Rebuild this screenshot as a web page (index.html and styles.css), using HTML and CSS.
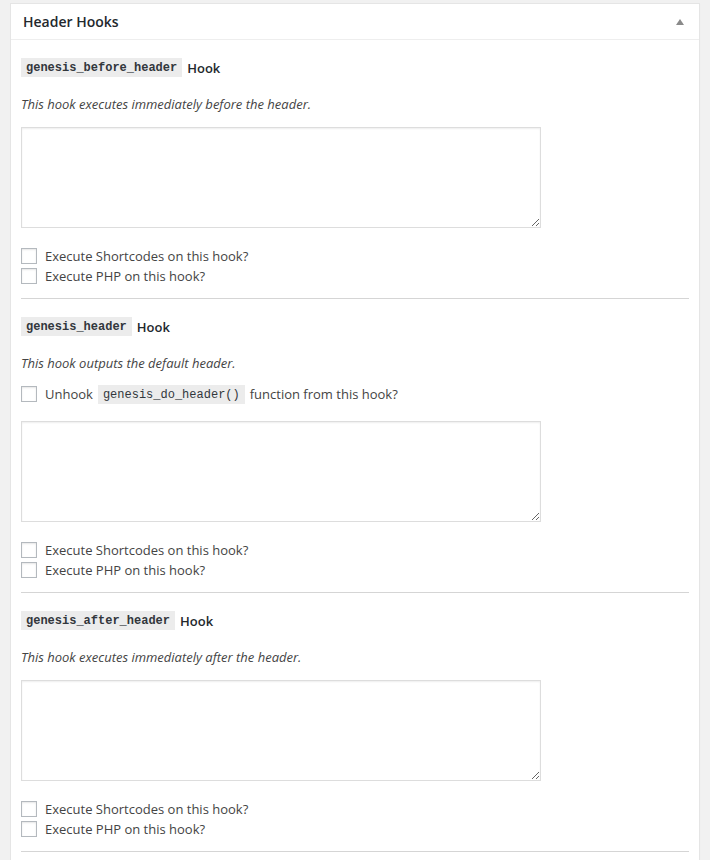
FILE: index.html
```
<!DOCTYPE html>
<html lang="en">
<head>
    <meta charset="UTF-8">
    <meta name="viewport" content="width=device-width, initial-scale=1.0">
    <title>Header Hooks</title>
    <link rel="stylesheet" href="styles.css">
</head>
<body>
    <div class="postbox">
        <div class="postbox-header">
            <h2>Header Hooks</h2>
            <span class="toggle-indicator"></span>
        </div>

        <div class="inside">
            <div class="hook">
                <h4 class="hook-title"><code>genesis_before_header</code> Hook</h4>
                <p class="description">This hook executes immediately before the header.</p>
                <textarea class="hook-code"></textarea>
                <div class="options">
                    <label class="option"><input type="checkbox"> Execute Shortcodes on this hook?</label>
                    <label class="option"><input type="checkbox"> Execute PHP on this hook?</label>
                </div>
            </div>

            <hr>

            <div class="hook">
                <h4 class="hook-title"><code>genesis_header</code> Hook</h4>
                <p class="description">This hook outputs the default header.</p>
                <label class="option unhook"><input type="checkbox"> Unhook <code>genesis_do_header()</code> function from this hook?</label>
                <textarea class="hook-code after-unhook"></textarea>
                <div class="options">
                    <label class="option"><input type="checkbox"> Execute Shortcodes on this hook?</label>
                    <label class="option"><input type="checkbox"> Execute PHP on this hook?</label>
                </div>
            </div>

            <hr>

            <div class="hook">
                <h4 class="hook-title"><code>genesis_after_header</code> Hook</h4>
                <p class="description">This hook executes immediately after the header.</p>
                <textarea class="hook-code"></textarea>
                <div class="options">
                    <label class="option"><input type="checkbox"> Execute Shortcodes on this hook?</label>
                    <label class="option"><input type="checkbox"> Execute PHP on this hook?</label>
                </div>
            </div>

            <hr>
        </div>
    </div>
</body>
</html>
```

FILE: styles.css
```
body {
    margin: 3px 0 0 10px;
    background: #f1f1f1;
    font-family: 'Open Sans', 'Noto Sans', sans-serif;
    font-size: 13px;
    color: #444;
}

.postbox {
    width: 688px;
    background: #fff;
    border: 1px solid #e5e5e5;
    box-shadow: 0 1px 1px rgba(0, 0, 0, 0.04);
    padding-bottom: 40px;
}

.postbox-header {
    display: flex;
    align-items: center;
    justify-content: space-between;
    height: 35px;
    padding: 0 15px 0 12px;
    border-bottom: 1px solid #eee;
}

.postbox-header h2 {
    margin: 0;
    font-size: 14px;
    font-weight: 600;
    color: #23282d;
}

.toggle-indicator {
    width: 0;
    height: 0;
    border-left: 4px solid transparent;
    border-right: 4px solid transparent;
    border-bottom: 6px solid #8a8a8a;
    margin-top: 1px;
}

.inside {
    padding: 0 10px;
}

code {
    font-family: 'Liberation Mono', 'DejaVu Sans Mono', monospace;
    font-size: 12px;
    background: #ececec;
    color: #32373c;
    padding: 3px 5px 1px;
    line-height: 15px;
}

.hook-title {
    display: flex;
    align-items: center;
    gap: 5px;
    height: 19px;
    margin: 18px 0 0;
    font-size: 13px;
    font-weight: 600;
    color: #23282d;
}

.hook-title code {
    font-weight: bold;
}

.description {
    margin: 17px 0 0;
    line-height: 20px;
    font-style: italic;
    color: #444;
}

.hook-code {
    display: block;
    box-sizing: border-box;
    width: 520px;
    height: 101px;
    margin: 13px 0 0;
    border: 1px solid #ddd;
    box-shadow: inset 0 1px 2px rgba(0, 0, 0, 0.07);
    background: #fff;
    resize: both;
}

.hook-code.after-unhook {
    margin-top: 17px;
}

.options {
    margin-top: 18px;
}

.option {
    display: flex;
    align-items: center;
    height: 20px;
    gap: 4px;
    color: #444;
}

.option input {
    appearance: none;
    -webkit-appearance: none;
    box-sizing: border-box;
    width: 16px;
    height: 16px;
    margin: 0 4px 0 0;
    border: 1px solid #b4b9be;
    background: #fff;
    box-shadow: inset 0 1px 2px rgba(0, 0, 0, 0.1);
}

.unhook {
    margin-top: 11px;
}

.unhook code {
    margin: 0 1px;
}

hr {
    margin: 12px 0 0;
    border: 0;
    border-top: 1px solid #d5d5d5;
    height: 0;
}
```
